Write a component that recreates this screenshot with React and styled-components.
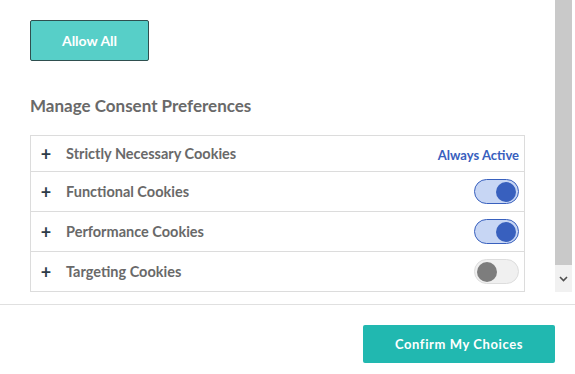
import React from "react";
import styled, { createGlobalStyle } from "styled-components";

const Global = createGlobalStyle`
  body {
    margin: 0;
    background: #ffffff;
    font-family: "Lato", "Noto Sans", sans-serif;
  }
`;

const Page = styled.div`
  width: 575px;
  height: 374px;
  display: flex;
  flex-direction: column;
  overflow: hidden;
`;

const ScrollRow = styled.div`
  height: 292px;
  display: flex;
`;

const Content = styled.div`
  width: 555px;
  flex-shrink: 0;
  box-sizing: border-box;
  padding: 20px 30px 0 30px;
  overflow: hidden;
`;

const Scrollbar = styled.div`
  width: 17px;
  display: flex;
  flex-direction: column;
`;

const Thumb = styled.div`
  flex: 1;
  background: #c9c9c9;
`;

const ArrowButton = styled.div`
  height: 27px;
  background: #f1f1f1;
  display: flex;
  align-items: center;
  justify-content: center;
`;

const AllowButton = styled.button`
  width: 119px;
  height: 41px;
  box-sizing: border-box;
  background: #57cfc8;
  border: 1px solid #2f4f4f;
  border-radius: 2px;
  color: #ffffff;
  font-family: inherit;
  font-weight: 700;
  font-size: 14px;
  padding: 0;
  display: block;
`;

const Title = styled.h3`
  margin: 35px 0 0 0;
  font-size: 17px;
  line-height: 20px;
  font-weight: 700;
  color: #696969;
`;

const Table = styled.div`
  margin-top: 19px;
  width: 495px;
  box-sizing: border-box;
  border: 1px solid #dcdcdc;
  border-bottom: none;
`;

const Row = styled.div`
  height: ${(p) => (p.$first ? 35 : 39)}px;
  border-bottom: 1px solid #dcdcdc;
  display: flex;
  align-items: center;
  padding: 0 5px 0 9px;
`;

const Plus = styled.span`
  width: 12px;
  font-size: 18px;
  font-weight: 700;
  color: #2d3c4a;
  line-height: 1;
  margin-right: 14px;
  text-align: center;
`;

const Label = styled.span`
  flex: 1;
  font-size: 14.5px;
  font-weight: 700;
  color: #696969;
`;

const Always = styled.span`
  font-size: 13px;
  font-weight: 700;
  color: #3860be;
  margin-top: 2px;
`;

const Toggle = styled.div`
  width: 45px;
  height: 25px;
  box-sizing: border-box;
  border-radius: 13px;
  border: 1px solid ${(p) => (p.$on ? "#3860be" : "#dddddd")};
  background: ${(p) => (p.$on ? "#c7d6f4" : "#f0f0f0")};
  display: flex;
  align-items: center;
  justify-content: ${(p) => (p.$on ? "flex-end" : "flex-start")};
  padding: 0 2px;
`;

const Knob = styled.div`
  width: 20px;
  height: 20px;
  border-radius: 50%;
  background: ${(p) => (p.$on ? "#3860be" : "#7d7d7d")};
`;

const Footer = styled.div`
  margin-top: 12px;
  border-top: 1px solid #e0e0e0;
  padding: 20px 20px 0 0;
  display: flex;
  justify-content: flex-end;
`;

const ConfirmButton = styled.button`
  width: 192px;
  height: 38px;
  background: #21b8b0;
  border: none;
  border-radius: 2px;
  color: #ffffff;
  font-family: inherit;
  font-weight: 700;
  font-size: 13px;
  letter-spacing: 0.6px;
  padding: 0;
`;

const rows = [
  { name: "Strictly Necessary Cookies", always: true },
  { name: "Functional Cookies", on: true },
  { name: "Performance Cookies", on: true },
  { name: "Targeting Cookies", on: false },
];

export default function App() {
  return (
    <Page>
      <Global />
      <ScrollRow>
        <Content>
          <AllowButton>Allow All</AllowButton>
          <Title>Manage Consent Preferences</Title>
          <Table>
            {rows.map((r, i) => (
              <Row key={r.name} $first={i === 0}>
                <Plus>+</Plus>
                <Label>{r.name}</Label>
                {r.always ? (
                  <Always>Always Active</Always>
                ) : (
                  <Toggle $on={r.on}>
                    <Knob $on={r.on} />
                  </Toggle>
                )}
              </Row>
            ))}
          </Table>
        </Content>
        <Scrollbar>
          <Thumb />
          <ArrowButton>
            <svg width="9" height="6" viewBox="0 0 9 6">
              <path d="M1 1 L4.5 4.5 L8 1" stroke="#505050" strokeWidth="1.6" fill="none" />
            </svg>
          </ArrowButton>
        </Scrollbar>
      </ScrollRow>
      <Footer>
        <ConfirmButton>Confirm My Choices</ConfirmButton>
      </Footer>
    </Page>
  );
}
